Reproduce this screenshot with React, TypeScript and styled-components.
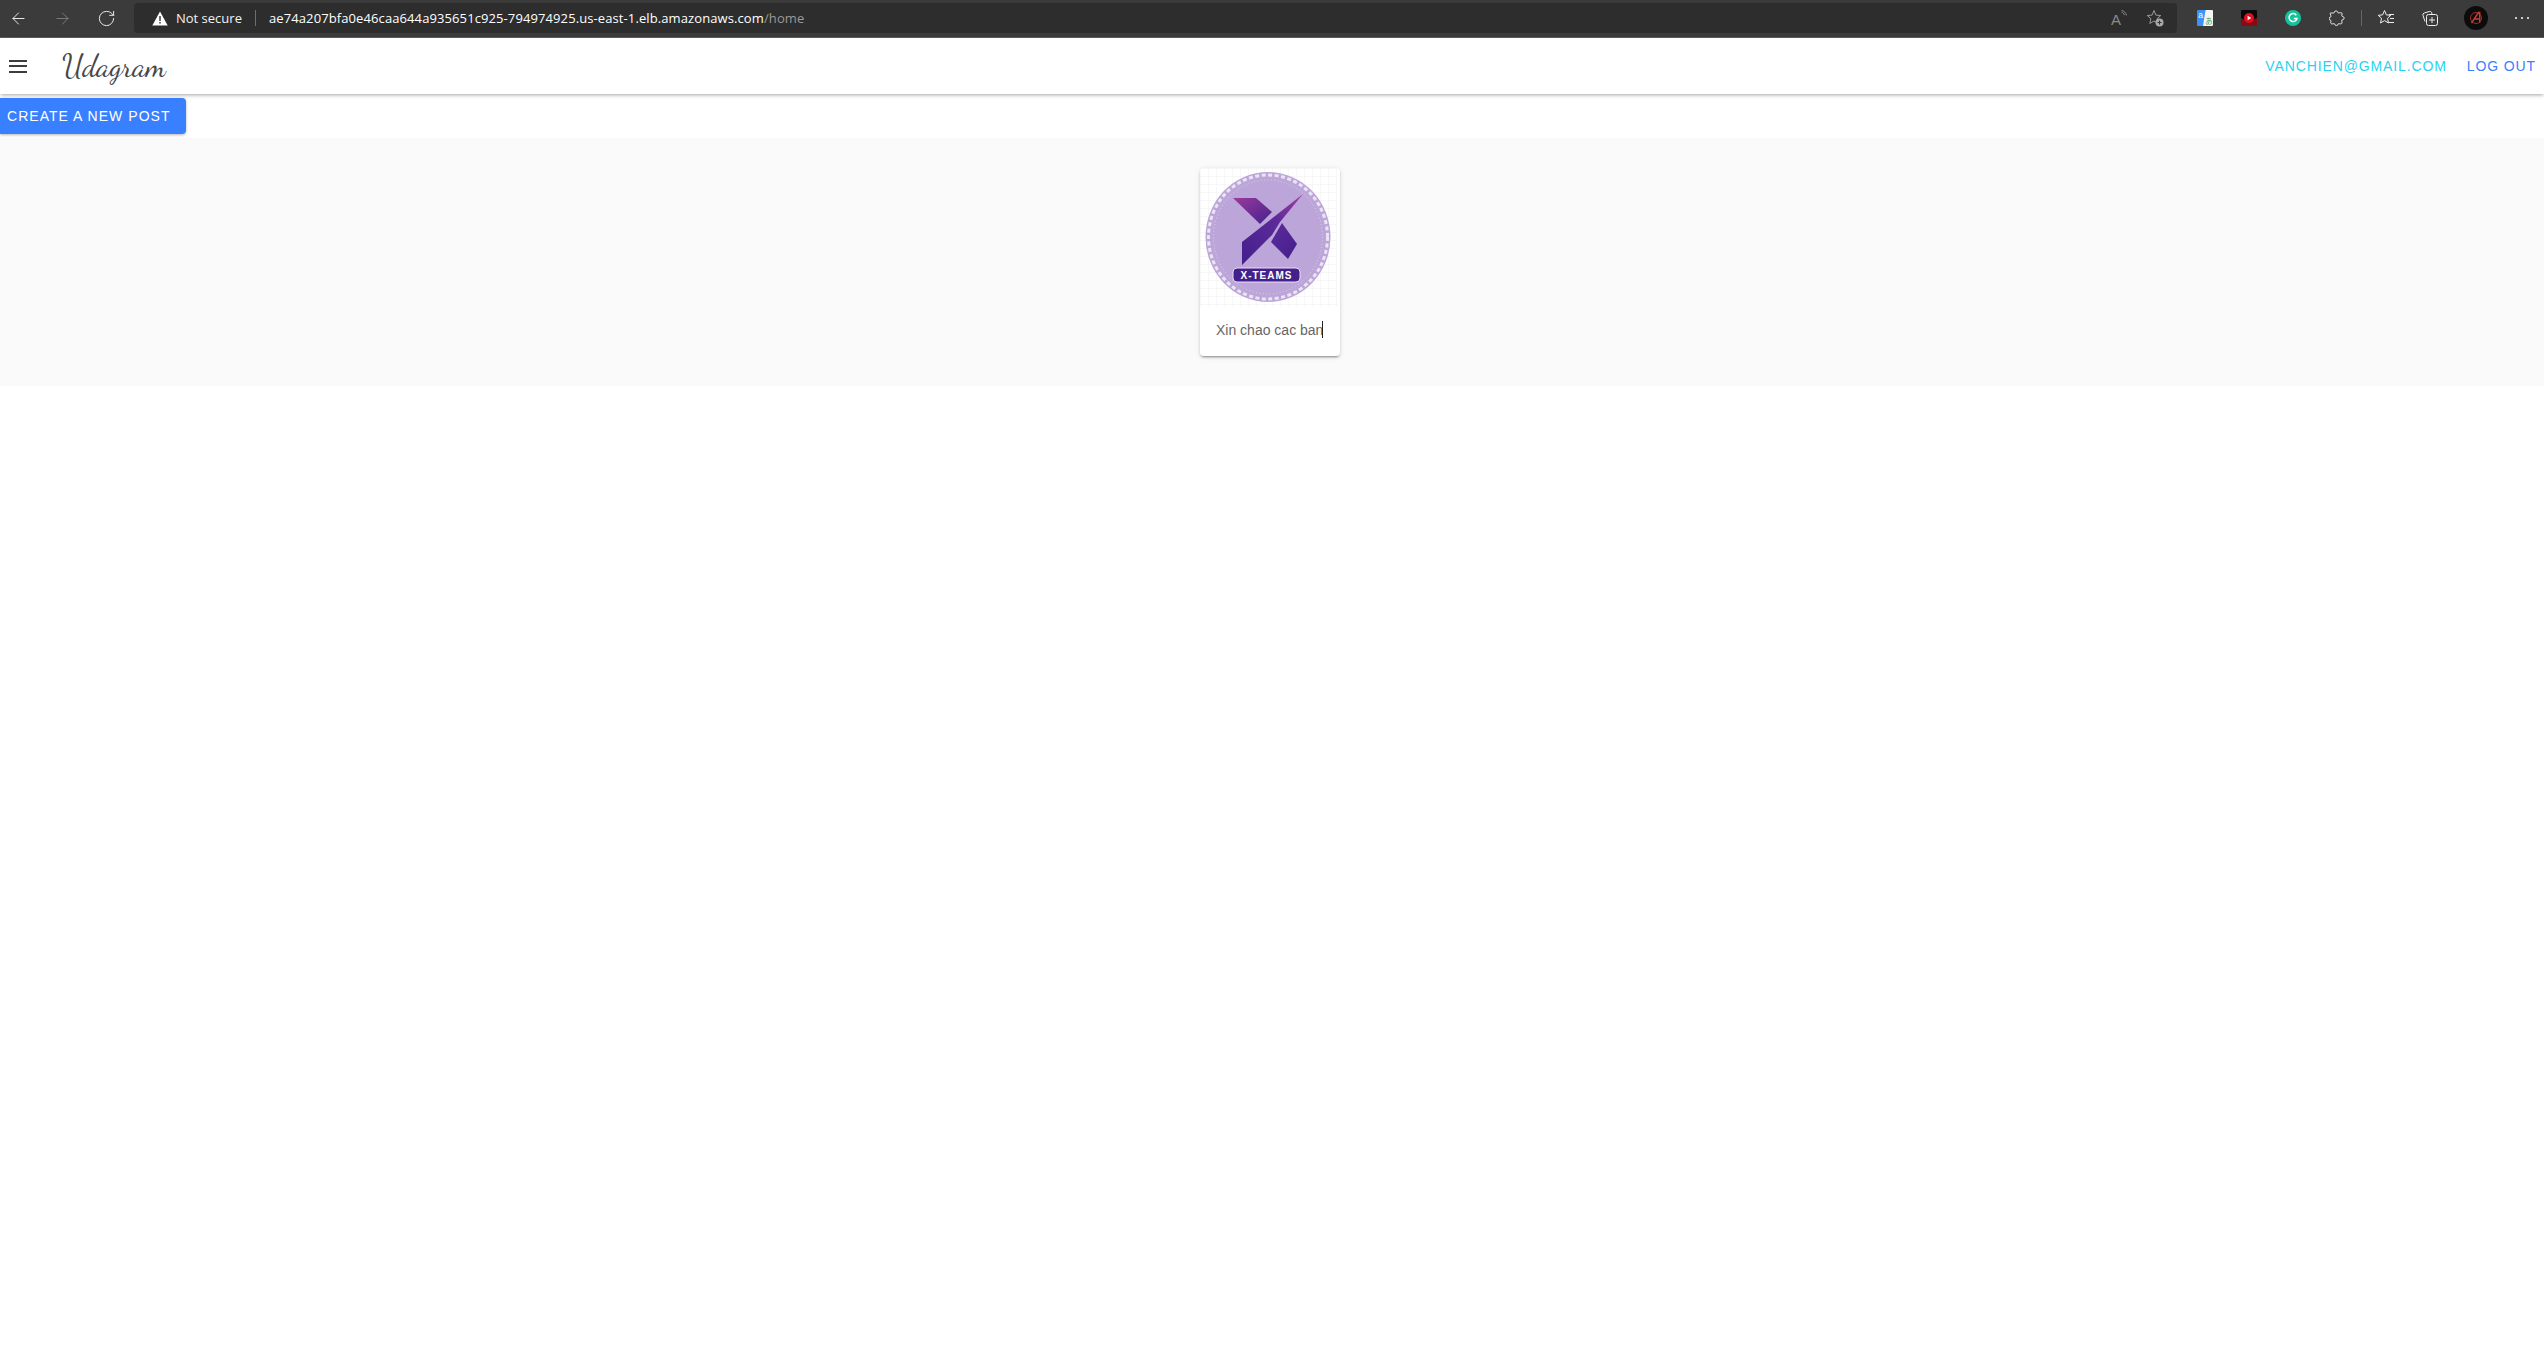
import React from "react";
import styled, { createGlobalStyle } from "styled-components";
import { ArrowLeft, ArrowRight, RotateCw } from "lucide-react";

const GlobalStyle = createGlobalStyle`
  html, body {
    margin: 0;
    padding: 0;
    background: #ffffff;
    font-family: "Liberation Sans", Arial, sans-serif;
  }
`;

const Page = styled.div`
  display: flex;
  flex-direction: column;
  width: 2544px;
  height: 1359px;
  overflow: hidden;
  background: #ffffff;
`;

const BrowserBar = styled.div`
  display: flex;
  align-items: center;
  flex: none;
  height: 36px;
  padding-bottom: 1px;
  background: #3b3b3b;
  border-bottom: 1px solid #5e5e5e;
  box-sizing: content-box;
`;

const NavGroup = styled.div`
  display: flex;
  align-items: center;
  width: 134px;
  flex: none;
  padding-left: 9px;
  gap: 25px;
  box-sizing: border-box;
`;

const NavIcon = styled.span<{ $dim?: boolean }>`
  display: flex;
  width: 19px;
  color: ${(p) => (p.$dim ? "#7c7c7c" : "#f0f0f0")};
`;

const AddressBar = styled.div`
  display: flex;
  align-items: center;
  width: 2043px;
  height: 30px;
  flex: none;
  background: #2d2d2d;
  border-radius: 4px;
  padding: 0 13px 0 18px;
  box-sizing: border-box;
  font-family: "Open Sans", sans-serif;
  font-size: 13px;
  color: #f2f2f2;
`;

const NotSecure = styled.span`
  margin-left: 8px;
  width: 79px;
  flex: none;
  white-space: nowrap;
`;

const Divider = styled.span`
  flex: none;
  width: 1px;
  height: 16px;
  background: #6e6e6e;
`;

const Url = styled.span`
  margin-left: 13px;
  white-space: nowrap;
  letter-spacing: 0.1px;
  color: #ffffff;
`;

const UrlPath = styled.span`
  color: #9a9a9a;
`;

const Spacer = styled.div`
  flex: 1;
`;

const InnerIcons = styled.div`
  display: flex;
  align-items: center;
  gap: 19px;
`;

const ToolIcons = styled.div`
  display: flex;
  align-items: center;
  flex: 1;
  padding-left: 16px;
`;

const ToolSlot = styled.span<{ $w: number; $gap?: number }>`
  display: flex;
  flex: none;
  align-items: center;
  justify-content: center;
  width: ${(p) => p.$w}px;
  margin-left: ${(p) => p.$gap ?? 0}px;
`;

const ToolSep = styled.span`
  flex: none;
  width: 1px;
  height: 16px;
  background: #666;
  margin: 0 6px 0 12px;
`;

const Header = styled.header`
  display: flex;
  align-items: center;
  flex: none;
  height: 56px;
  background: #ffffff;
  box-shadow: 0 2px 4px -1px rgba(0, 0, 0, 0.25), 0 1px 3px rgba(0, 0, 0, 0.12);
  position: relative;
  padding-left: 9px;
  box-sizing: border-box;
`;

const MenuIcon = styled.span`
  display: flex;
  flex-direction: column;
  gap: 3.5px;
  width: 18px;
  flex: none;
`;

const MenuLine = styled.span`
  height: 2px;
  background: #3d3d3d;
`;

const Brand = styled.div`
  margin-left: 35px;
  font-family: "Dancing Script", cursive;
  font-size: 30.5px;
  color: #474747;
`;

const HeaderLink = styled.a<{ $color: string }>`
  color: ${(p) => p.$color};
  font-size: 14px;
  letter-spacing: 0.88px;
  text-transform: uppercase;
  white-space: nowrap;
`;

const HeaderLinks = styled.nav`
  display: flex;
  gap: 20px;
  margin-right: 8px;
`;

const ActionRow = styled.div`
  flex: none;
  height: 44px;
  padding-top: 4px;
  box-sizing: border-box;
`;

const PrimaryButton = styled.button`
  display: block;
  width: 186px;
  height: 36px;
  border: 0;
  padding: 0 0 0 7px;
  text-align: left;
  background: #3880ff;
  color: #ffffff;
  border-radius: 0 4px 4px 0;
  font-family: "Liberation Sans", sans-serif;
  font-size: 14px;
  letter-spacing: 1.03px;
  box-shadow: 0 1px 3px rgba(0, 0, 0, 0.3);
`;

const Feed = styled.main`
  display: flex;
  justify-content: center;
  flex: none;
  background: #fafafa;
  padding: 30px 4px 30px 0;
`;

const Card = styled.article`
  width: 140px;
  height: 188px;
  background: #ffffff;
  border-radius: 4px;
  overflow: hidden;
  box-shadow: 0 3px 1px -2px rgba(0, 0, 0, 0.2), 0 2px 2px rgba(0, 0, 0, 0.14),
    0 1px 5px rgba(0, 0, 0, 0.12);
`;

const CardImage = styled.svg`
  display: block;
  width: 138px;
  height: 139px;
`;

const Caption = styled.div`
  display: flex;
  align-items: center;
  height: 49px;
  padding: 0 0 4px 16px;
  box-sizing: border-box;
  font-size: 14px;
  color: #666666;
  white-space: nowrap;
`;

const Caret = styled.span`
  display: inline-block;
  width: 1px;
  height: 17px;
  background: #222;
  margin-left: -1px;
`;

function Logo() {
  return (
    <CardImage viewBox="0 0 138 139">
      <defs>
        <pattern id="grid" width="8" height="8" patternUnits="userSpaceOnUse">
          <path d="M8 0H0V8" fill="none" stroke="#efefef" strokeWidth="1" />
        </pattern>
        <linearGradient id="arm" x1="0" y1="1" x2="1" y2="0">
          <stop offset="0" stopColor="#43208c" />
          <stop offset="0.6" stopColor="#5d2a9b" />
          <stop offset="1" stopColor="#a53f9c" />
        </linearGradient>
        <linearGradient id="armTop" x1="0" y1="0" x2="1" y2="1">
          <stop offset="0" stopColor="#9a3a9c" />
          <stop offset="1" stopColor="#45218d" />
        </linearGradient>
        <linearGradient id="armLow" x1="0" y1="0" x2="1" y2="1">
          <stop offset="0" stopColor="#5e2a9c" />
          <stop offset="1" stopColor="#43208c" />
        </linearGradient>
      </defs>
      <rect width="138" height="139" fill="#ffffff" />
      <rect width="138" height="139" fill="url(#grid)" />
      <ellipse cx="68" cy="69" rx="62.5" ry="65" fill="#bca5d8" />
      <ellipse cx="68" cy="69" rx="59.5" ry="62" fill="none" stroke="#ffffff" strokeOpacity="0.7" strokeWidth="3" strokeDasharray="4 2.5" />
      <ellipse cx="68" cy="69" rx="54.5" ry="57" fill="none" stroke="#ffffff" strokeOpacity="0.6" strokeWidth="0.8" strokeDasharray="1 2.4" />
      <polygon points="33,30 56,30 72,44 60,56" fill="url(#armTop)" />
      <polygon points="103,26 42,74 42,97 72,67 80,54" fill="url(#arm)" />
      <polygon points="82,55 97,76 88,91 71,74" fill="url(#armLow)" />
      <rect x="33" y="100" width="67" height="14" rx="4" fill="#43208c" stroke="#e9dff5" strokeWidth="1" />
      <text
        x="66.5"
        y="111"
        textAnchor="middle"
        fontFamily="'Liberation Sans', sans-serif"
        fontWeight="700"
        fontSize="10"
        letterSpacing="1"
        fill="#ffffff"
      >
        X-TEAMS
      </text>
    </CardImage>
  );
}

function CollectionsIcon() {
  return (
    <svg width="18" height="18" viewBox="0 0 18 18" fill="none" stroke="#eeeeee" strokeWidth="1">
      <path d="M4 12.5 2 6.5a2 2 0 0 1 1.3-2.5l5-1.5a2 2 0 0 1 2.4 1.2L11 5.5" />
      <rect x="5.5" y="5.5" width="11" height="11" rx="2" />
      <path d="M11 8v6M8 11h6" />
    </svg>
  );
}

function FavoritesIcon() {
  return (
    <svg width="18" height="18" viewBox="0 0 18 18" fill="none" stroke="#eeeeee" strokeWidth="1">
      <path d="M7.5 1.5l1.9 4.4 4.4.4-3.3 3 1 4.7-4-2.4-4 2.4 1-4.7L1.2 6.3l4.4-.4z" />
      <path d="M12 5.5h5M13 9.5h4M12 13.5h5" />
    </svg>
  );
}

function ExtensionsIcon() {
  return (
    <svg width="16" height="16" viewBox="0 0 16 16" fill="none" stroke="#f2f2f2" strokeWidth="1">
      <path d="M5.2 2.6C5 .6 8.6.4 8.8 2.4c.1.8 1.2.5 2.6.3 1.1-.2 1.8.4 1.6 1.5-.2 1.2-.5 2 .3 2.2 2.3-.2 2.3 3.6 0 3.4-.8 0-.5 1.2-.3 2.4.2 1.1-.5 1.9-1.6 1.7-1.3-.2-2.2-.5-2.4.3.1 1.8-3.3 1.8-3.2 0-.2-.8-1.2-.5-2.4-.3-1.1.2-1.9-.6-1.7-1.7.2-1 .5-1.9-.3-2-1.7 0-1.7-3.1 0-3.1.8-.1.5-1.2.3-2.2C.5 3.6 1.3 2.7 2.4 2.9c1.2.2 2.7.5 2.8-.3z" />
    </svg>
  );
}

function ReadAloudIcon() {
  return (
    <svg width="16" height="16" viewBox="0 0 16 16" fill="none" stroke="#8a8a8a" strokeWidth="1">
      <text x="0" y="14.5" fontSize="15" fill="#8a8a8a" stroke="none" fontFamily="'Liberation Sans', sans-serif">A</text>
      <path d="M10.5 2.2c1.6.4 2.6 1.4 3 3M10.5 .4c2.6.6 4.4 2.4 5 5" />
    </svg>
  );
}

function FavAddIcon() {
  return (
    <svg width="18" height="18" viewBox="0 0 18 18" fill="none">
      <path d="M8 1.5l1.9 4.6 4.9.4-3.7 3.2 1.1 4.8L8 12l-4.2 2.5 1.1-4.8L1.2 6.5l4.9-.4z" stroke="#9a9a9a" strokeWidth="1" />
      <circle cx="13.5" cy="13.5" r="4" fill="#a8a8a8" />
      <path d="M13.5 11.5v4M11.5 13.5h4" stroke="#333" strokeWidth="1" />
    </svg>
  );
}

function TranslateIcon() {
  return (
    <svg width="16" height="16" viewBox="0 0 16 16">
      <rect width="8.5" height="16" rx="1" fill="#3b93f7" />
      <path d="M8.5 0H15a1 1 0 0 1 1 1v14a1 1 0 0 1-1 1H6z" fill="#f5f5f5" />
      <text x="1.2" y="8" fontSize="8.5" fill="#ffffff" fontFamily="'Liberation Sans', sans-serif">a</text>
      <text x="8" y="14" fontSize="7.5" fill="#4a9a44" fontFamily="'Noto Sans CJK JP', sans-serif">あ</text>
    </svg>
  );
}

function MusicIcon() {
  return (
    <svg width="16" height="16" viewBox="0 0 16 16">
      <rect width="16" height="16" rx="1" fill="#8a0a12" />
      <path d="M0 1a1 1 0 0 1 1-1h14a1 1 0 0 1 1 1v7c-3 1-5 3-8 3s-5-2-8-3z" fill="#0a0a0a" />
      <circle cx="8" cy="8" r="5" fill="#e01020" />
      <path d="M6.6 5.8v4.4L10.2 8z" fill="#ffffff" />
    </svg>
  );
}

function GrammarlyIcon() {
  return (
    <svg width="16" height="16" viewBox="0 0 16 16">
      <circle cx="8" cy="8" r="8" fill="#15c39a" />
      <path d="M11.3 5.2A4 4 0 1 0 12 8.4H8.8" fill="none" stroke="#ffffff" strokeWidth="1.5" />
    </svg>
  );
}

function AvatarIcon() {
  return (
    <svg width="24" height="24" viewBox="0 0 24 24" fill="none">
      <circle cx="12" cy="12" r="12" fill="#0c0c0c" />
      <circle cx="12" cy="12" r="5.5" stroke="#9c2c28" strokeWidth="1" />
      <path d="M7.5 17 14.5 6.5h1.2v10M10.5 13h5" stroke="#c83c34" strokeWidth="1.4" />
    </svg>
  );
}

function MoreIcon() {
  return (
    <svg width="16" height="4" viewBox="0 0 16 4" fill="#eeeeee">
      <circle cx="2" cy="2" r="1.1" />
      <circle cx="8" cy="2" r="1.1" />
      <circle cx="14" cy="2" r="1.1" />
    </svg>
  );
}

function WarningIcon() {
  return (
    <svg width="16" height="15" viewBox="0 0 16 15">
      <path d="M8 .5 15.7 14.5H.3z" fill="#ffffff" />
      <path d="M7.3 5h1.4v5H7.3zM7.3 11h1.4v1.6H7.3z" fill="#2d2d2d" />
    </svg>
  );
}

export default function App() {
  return (
    <Page>
      <GlobalStyle />
      <BrowserBar>
        <NavGroup>
          <NavIcon><ArrowLeft size={19} strokeWidth={1.2} /></NavIcon>
          <NavIcon $dim><ArrowRight size={19} strokeWidth={1.2} /></NavIcon>
          <NavIcon><RotateCw size={19} strokeWidth={1.2} /></NavIcon>
        </NavGroup>
        <AddressBar>
          <WarningIcon />
          <NotSecure>Not secure</NotSecure>
          <Divider />
          <Url>
            ae74a207bfa0e46caa644a935651c925-794974925.us-east-1.elb.amazonaws.com
            <UrlPath>/home</UrlPath>
          </Url>
          <Spacer />
          <InnerIcons>
            <ReadAloudIcon />
            <FavAddIcon />
          </InnerIcons>
        </AddressBar>
        <ToolIcons>
          <ToolSlot $w={24}><TranslateIcon /></ToolSlot>
          <ToolSlot $w={24} $gap={20}><MusicIcon /></ToolSlot>
          <ToolSlot $w={24} $gap={20}><GrammarlyIcon /></ToolSlot>
          <ToolSlot $w={24} $gap={20}><ExtensionsIcon /></ToolSlot>
          <ToolSep />
          <ToolSlot $w={36}><FavoritesIcon /></ToolSlot>
          <ToolSlot $w={36} $gap={8}><CollectionsIcon /></ToolSlot>
          <ToolSlot $w={30} $gap={13}><AvatarIcon /></ToolSlot>
          <ToolSlot $w={26} $gap={18}><MoreIcon /></ToolSlot>
        </ToolIcons>
      </BrowserBar>
      <Header>
        <MenuIcon>
          <MenuLine />
          <MenuLine />
          <MenuLine />
        </MenuIcon>
        <Brand>Udagram</Brand>
        <Spacer />
        <HeaderLinks>
          <HeaderLink $color="#1fd3f2">vanchien@gmail.com</HeaderLink>
          <HeaderLink $color="#3880ff">Log out</HeaderLink>
        </HeaderLinks>
      </Header>
      <ActionRow>
        <PrimaryButton>CREATE A NEW POST</PrimaryButton>
      </ActionRow>
      <Feed>
        <Card>
          <Logo />
          <Caption>
            Xin chao cac ban
            <Caret />
          </Caption>
        </Card>
      </Feed>
    </Page>
  );
}
